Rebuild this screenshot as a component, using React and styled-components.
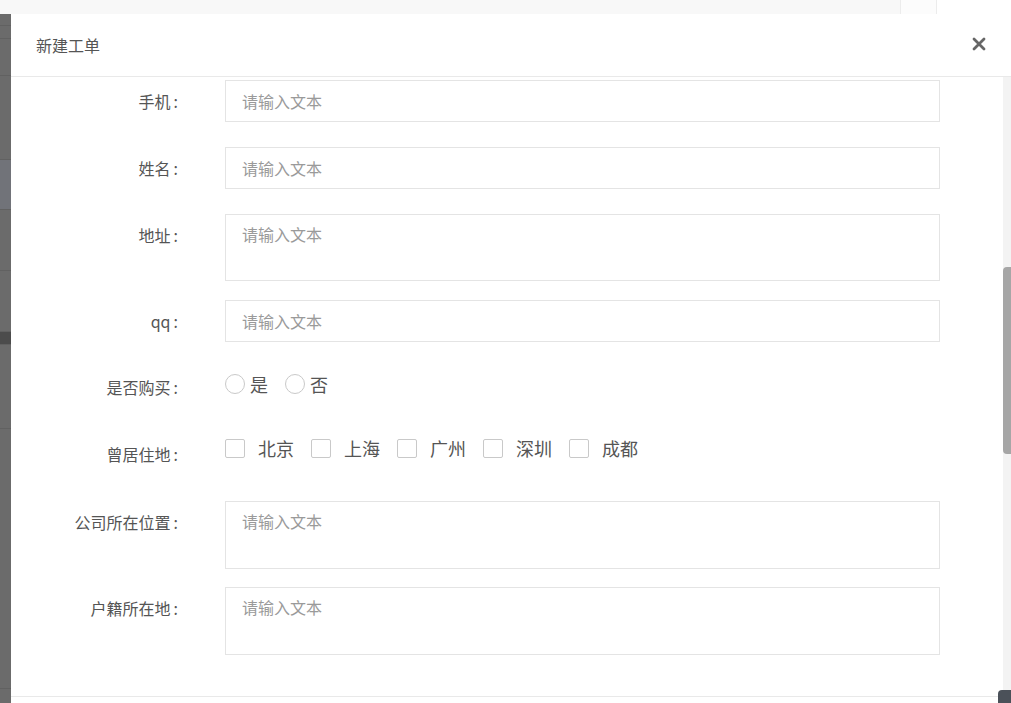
import React from 'react'
import styled, { createGlobalStyle } from 'styled-components'

const GlobalStyle = createGlobalStyle`
  html, body {
    margin: 0;
    padding: 0;
    height: 100%;
    overflow: hidden;
    background: #f8f8f8;
    font-family: 'Noto Sans CJK SC', 'Noto Sans', sans-serif;
  }
  #root {
    height: 100%;
  }
  * {
    box-sizing: border-box;
  }
`

const fields = [
  { label: '手机', type: 'input', mb: 25 },
  { label: '姓名', type: 'input', mb: 25 },
  { label: '地址', type: 'textarea', mb: 19 },
  { label: 'qq', type: 'input', mb: 24 },
]

const cities = ['北京', '上海', '广州', '深圳', '成都']

const App = () => {
  return (
    <Page>
      <GlobalStyle />
      <TopBar>
        <TopCell />
        <TopCell $wide />
      </TopBar>
      <Main>
        <Sidebar>
          <SideBlock $h={12} />
          <SideBlock $h={13} />
          <SideBlock $h={37} />
          <SideBlock $h={84} />
          <SideBlock $h={50} $bg="#717379" />
          <SideBlock $h={61} />
          <SideBlock $h={61} />
          <SideBlock $h={13} $bg="#4c4c4c" />
          <SideBlock $h={84} />
          <SideBlock $h={260} />
        </Sidebar>
        <Modal>
          <Header>
            <Title>新建工单</Title>
            <Close aria-label="close">
              <svg width="14" height="14" viewBox="0 0 14 14">
                <path
                  d="M2 2 L12 12 M12 2 L2 12"
                  stroke="#666"
                  strokeWidth="2.8"
                  strokeLinecap="round"
                />
              </svg>
            </Close>
          </Header>
          <Body>
            <Form>
              {fields.map((f) => (
                <Row key={f.label} $mb={f.mb}>
                  <Label>
                    {f.label}
                    <Colon>:</Colon>
                  </Label>
                  <Control>
                    {f.type === 'input' ? (
                      <Input placeholder="请输入文本" />
                    ) : (
                      <TextArea $h={67} placeholder="请输入文本" />
                    )}
                  </Control>
                </Row>
              ))}
              <Row $mb={25}>
                <Label>
                  是否购买<Colon>:</Colon>
                </Label>
                <Choices $h={36}>
                  <Choice $gap={5} $mr={17}>
                    <Radio />
                    <ChoiceText>是</ChoiceText>
                  </Choice>
                  <Choice $gap={5} $mr={17}>
                    <Radio />
                    <ChoiceText>否</ChoiceText>
                  </Choice>
                </Choices>
              </Row>
              <Row $mb={26}>
                <Label>
                  曾居住地<Colon>:</Colon>
                </Label>
                <Choices $h={30}>
                  {cities.map((c) => (
                    <Choice key={c} $gap={13} $mr={17}>
                      <Check />
                      <ChoiceText>{c}</ChoiceText>
                    </Choice>
                  ))}
                </Choices>
              </Row>
              <Row $mb={18}>
                <Label>
                  公司所在位置<Colon>:</Colon>
                </Label>
                <Control>
                  <TextArea $h={68} placeholder="请输入文本" />
                </Control>
              </Row>
              <Row $mb={40}>
                <Label>
                  户籍所在地<Colon>:</Colon>
                </Label>
                <Control>
                  <TextArea $h={68} placeholder="请输入文本" />
                </Control>
              </Row>
            </Form>
            <ScrollTrack>
              <ScrollThumb />
            </ScrollTrack>
          </Body>
          <Footer />
        </Modal>
      </Main>
      <Corner />
    </Page>
  )
}

const Page = styled.div`
  height: 100vh;
  display: flex;
  flex-direction: column;
  overflow: hidden;
`
const TopBar = styled.div`
  height: 14px;
  flex-shrink: 0;
  display: flex;
  justify-content: flex-end;
  background: #f8f8f8;
`
const TopCell = styled.div`
  width: ${(p) => (p.$wide ? '75px' : '36px')};
  border-left: 1px solid #ececec;
  background: ${(p) => (p.$wide ? '#fff' : '#fcfcfc')};
`
const Main = styled.div`
  flex: 1;
  display: flex;
  min-height: 0;
`
const Sidebar = styled.div`
  width: 11px;
  flex-shrink: 0;
  background: #6b6b6b;
  display: flex;
  flex-direction: column;
`
const SideBlock = styled.div`
  height: ${(p) => p.$h}px;
  flex-shrink: 0;
  background: ${(p) => p.$bg || '#6b6b6b'};
  border-bottom: 1px solid #616161;
`
const Modal = styled.div`
  flex: 1;
  background: #fff;
  display: flex;
  flex-direction: column;
  min-width: 0;
`
const Header = styled.div`
  height: 63px;
  flex-shrink: 0;
  display: flex;
  align-items: center;
  justify-content: space-between;
  padding: 0 25px 0 25px;
  border-bottom: 1px solid #e9e9e9;
`
const Title = styled.div`
  font-size: 16px;
  color: #555;
  line-height: 20px;
`
const Close = styled.div`
  display: flex;
  cursor: pointer;
  margin-top: -2px;
`
const Body = styled.div`
  height: 619px;
  flex-shrink: 0;
  display: flex;
`
const Form = styled.div`
  flex: 1;
  padding: 3px 63px 0 37px;
  overflow: hidden;
`
const Row = styled.div`
  display: flex;
  align-items: flex-start;
  margin-bottom: ${(p) => p.$mb}px;
`
const Label = styled.div`
  width: 130px;
  margin-right: 47px;
  flex-shrink: 0;
  text-align: right;
  font-size: 16px;
  line-height: 42px;
  color: #555;
`
const Colon = styled.span`
  margin-left: 3px;
`
const Control = styled.div`
  flex: 1;
  display: flex;
`
const fieldStyle = `
  width: 100%;
  border: 1px solid #e4e4e4;
  border-radius: 0;
  background: #fff;
  font-family: 'Noto Sans CJK SC', 'Noto Sans', sans-serif;
  font-size: 16px;
  color: #333;
  outline: none;
  padding: 0 16px;
  &::placeholder {
    color: #9a9a9a;
  }
`
const Input = styled.input`
  ${fieldStyle}
  height: 42px;
`
const TextArea = styled.textarea`
  ${fieldStyle}
  display: block;
  height: ${(p) => p.$h}px;
  resize: none;
  line-height: 22px;
  padding-top: 8px;
`
const Choices = styled.div`
  height: ${(p) => p.$h}px;
  display: flex;
  align-items: center;
`
const Choice = styled.label`
  display: flex;
  align-items: center;
  gap: ${(p) => p.$gap}px;
  margin-right: ${(p) => p.$mr}px;
  cursor: pointer;
`
const Radio = styled.span`
  width: 20px;
  height: 20px;
  border-radius: 50%;
  border: 1px solid #c9c9c9;
  background: #fff;
`
const Check = styled.span`
  width: 20px;
  height: 19px;
  border-radius: 2px;
  border: 1px solid #c9c9c9;
  background: #fff;
`
const ChoiceText = styled.span`
  font-size: 18px;
  line-height: 24px;
  color: #555;
`
const ScrollTrack = styled.div`
  width: 8px;
  flex-shrink: 0;
  background: #f3f3f3;
  padding-top: 190px;
`
const ScrollThumb = styled.div`
  height: 187px;
  background: #a6a6a6;
  border-radius: 4px 0 0 4px;
`
const Footer = styled.div`
  flex: 1;
  border-top: 1px solid #e9e9e9;
  background: #fff;
`
const Corner = styled.div`
  position: fixed;
  right: 0;
  bottom: 0;
  width: 13px;
  height: 13px;
  background: #4b5159;
  border-radius: 4px 0 0 0;
`

export default App
